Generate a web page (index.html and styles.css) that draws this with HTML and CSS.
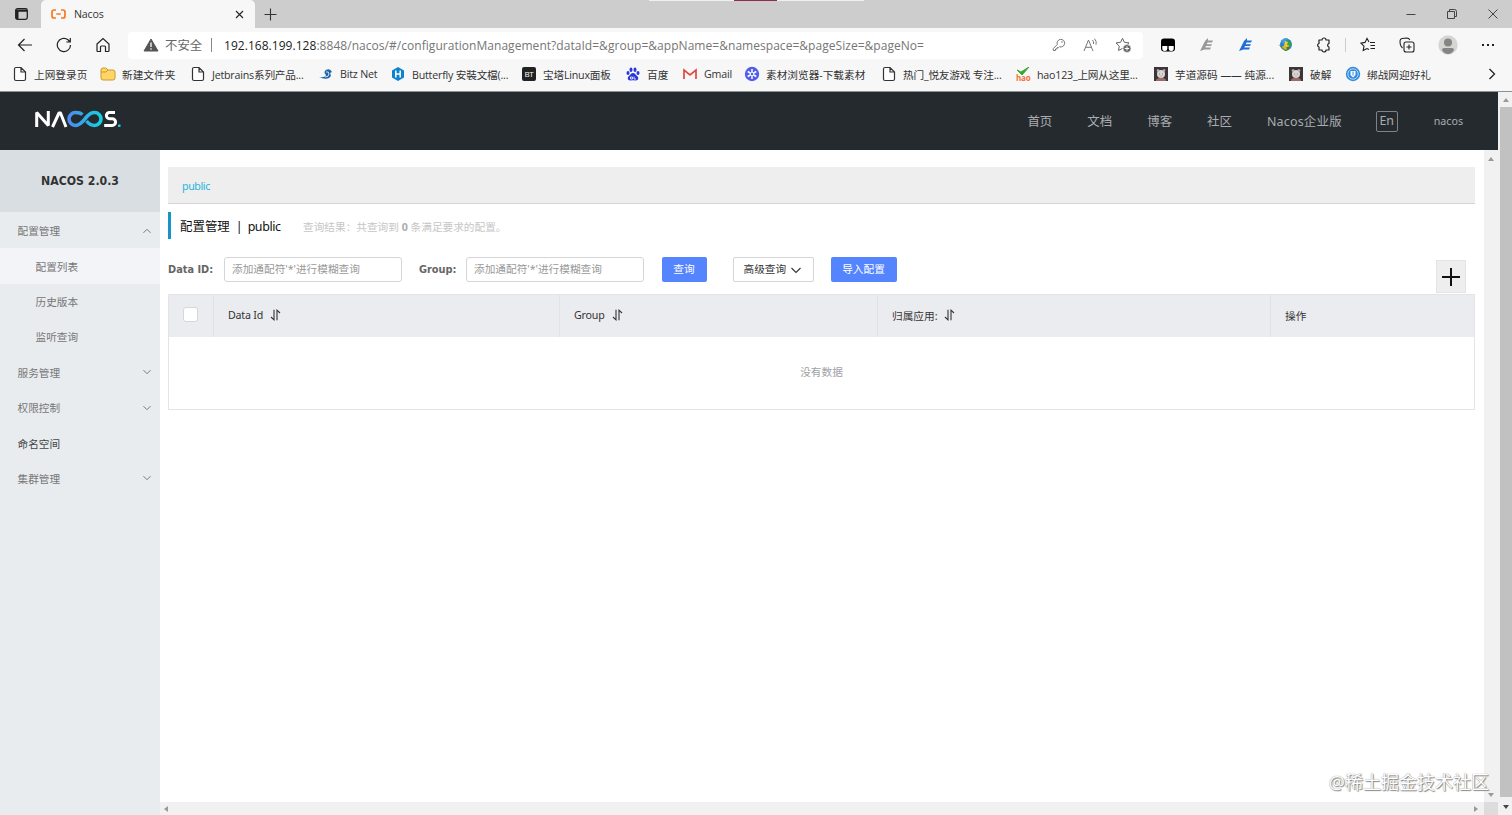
FILE: index.html
```html
<!DOCTYPE html>
<html lang="zh-CN">
<head>
<meta charset="UTF-8">
<title>Nacos</title>
<link rel="stylesheet" href="styles.css">
</head>
<body>

<!-- Shared icons -->
<svg class="defs" width="0" height="0">
    <symbol id="page" viewBox="0 0 16 16"><path d="M4 1.500h5l4.500 4.500v7a1.500 1.500 0 0 1-1.500 1.500H4A1.500 1.500 0 0 1 2.500 13V3A1.500 1.500 0 0 1 4 1.500zM9 1.500V6h4.500" fill="#fff" stroke="#333" stroke-width="1.200"/></symbol>
    <symbol id="chevron" viewBox="0 0 10 10"><path d="M1.500 3.200L5 6.700l3.500-3.500" fill="none" stroke="currentColor"/></symbol>
    <symbol id="sort" viewBox="0 0 11 12"><path d="M4 .8v10L1 8M7 11.200v-10L10 4" fill="none" stroke="#333" stroke-width="1.100"/></symbol>
    <symbol id="avatar" viewBox="0 0 14 14"><path d="M0 0h14v14H0z" fill="#3d3538"/><path d="M2 12.500q5-4 10 0V14H2z" fill="#9b6a62"/><circle cx="7" cy="7" r="4" fill="#d9d5d4"/><circle cx="4" cy="3.500" r="1.300" fill="#bbb5b5"/><circle cx="10" cy="3.500" r="1.300" fill="#bbb5b5"/><path d="M5 7h1M8 7h1M6.500 9h1" stroke="#888"/></symbol>
    <symbol id="ext" viewBox="0 0 16 16"><path d="M1 14L6 4l3-3v2.500h5L13 5.500H8.500l-.7 1.700H13L12 9H7l-.7 1.500H12L11 12.500H5.500z" fill="currentColor"/></symbol>
</svg>

<div class="browser">
    <div class="tabbar">
        <div class="tab-actions">
            <svg width="13" height="12" viewBox="0 0 13 12"><rect x=".7" y=".7" width="11.600" height="10.600" rx="1.800" fill="none" stroke="#222" stroke-width="1.300"/><path d="M1 1.500h11v2.200H1zM1 3h2.500v8H1z" fill="#222"/></svg>
        </div>
        <div class="tab">
            <svg width="15" height="10" viewBox="0 0 15 10"><path d="M5 1H3Q1 1 1 3v4q0 2 2 2h2M10 1h2q2 0 2 2v4q0 2-2 2h-2M5.300 5h4.400" fill="none" stroke="#f47a20" stroke-width="1.700"/></svg>
            <span class="tab-title">Nacos</span>
            <svg width="9" height="9" viewBox="0 0 9 9"><path d="M1 1l7 7M8 1L1 8" stroke="#222" stroke-width="1.100"/></svg>
        </div>
        <svg class="new-tab" width="13" height="13" viewBox="0 0 13 13"><path d="M6.500 .5v12M.5 6.500h12" stroke="#333" stroke-width="1.100"/></svg>
        <div class="top-strip"><span></span></div>
        <div class="window-buttons">
            <svg width="10" height="10" viewBox="0 0 10 10"><path d="M.5 5.500h9" stroke="#444"/></svg>
            <svg width="10" height="10" viewBox="0 0 10 10"><path d="M.5 2.500h7v7h-7zM2.500 2.500V.5h5q2 0 2 2v5h-2" fill="none" stroke="#444"/></svg>
            <svg width="10" height="10" viewBox="0 0 10 10"><path d="M.5 .5l9 9M9.500 .5l-9 9" stroke="#444"/></svg>
        </div>
    </div>

    <div class="toolbar">
        <div class="nav-icons">
            <svg width="16" height="16" viewBox="0 0 16 16"><path d="M15 8H1.500M7.500 2L1.500 8l6 6" fill="none" stroke="#222" stroke-width="1.200"/></svg>
            <svg width="16" height="16" viewBox="0 0 16 16"><path d="M14.500 8A6.600 6.600 0 1 1 12 2.800L14 5M14.300 1v4h-4" fill="none" stroke="#222" stroke-width="1.200"/></svg>
            <svg width="16" height="16" viewBox="0 0 16 16"><path d="M2 7l6-5.500L14 7v6.500q0 1-1 1h-2.500V10q0-1-1-1h-3q-1 0-1 1v4.500H3q-1 0-1-1z" fill="none" stroke="#222" stroke-width="1.200"/></svg>
        </div>
        <div class="address">
            <svg width="16" height="14" viewBox="0 0 16 14"><path d="M8 1l7 12H1z" fill="#555" stroke="#555" stroke-linejoin="round"/><path d="M8 4.500v4.500M8 10.300v1.500" stroke="#fff" stroke-width="1.300"/></svg>
            <span class="insecure">不安全</span>
            <span class="divider"></span>
            <span class="url"><b>192.168.199.128</b>:8848/nacos/#/configurationManagement?dataId=&amp;group=&amp;appName=&amp;namespace=&amp;pageSize=&amp;pageNo=</span>
            <svg width="14" height="14" viewBox="0 0 14 14"><path d="M5.300 6.500A3.800 3.800 0 1 1 7.500 8.700L6.500 9.700H5V11H3.500v1.500H1.300v-2z" fill="none" stroke="#777"/><circle cx="10" cy="4" r=".8" fill="#777"/></svg>
            <svg class="read" width="16" height="14" viewBox="0 0 16 14"><path d="M1 13L5.500 2 10 13M2.500 9.300h6M9.500 2q1.500 1.500 1 4M11.500 .7q2.500 2.500 1.500 6" fill="none" stroke="#777"/></svg>
            <svg width="17" height="16" viewBox="0 0 17 16"><path d="M7.500 1.300l1.900 4 4.600.6-3.300 3.200.8 4.400-4-2.100-4 2.100.8-4.400L1 5.900l4.600-.6z" fill="none" stroke="#666" stroke-linejoin="round"/><circle cx="12" cy="11.500" r="4" fill="#666" stroke="#fff" stroke-width=".6"/><path d="M12 9.300v4.400M9.800 11.500h4.400" stroke="#fff"/></svg>
        </div>
        <div class="ext-icons">
            <svg width="16" height="16" viewBox="0 0 16 16"><rect x="1" y="1.500" width="14" height="13" rx="3" fill="#000"/><path d="M2.300 9h5v2.500a2.500 2.500 0 0 1-5 0zM8.700 9h5v2.500a2.500 2.500 0 0 1-5 0z" fill="#fff"/></svg>
            <svg class="ext-gray" width="16" height="16"><use href="#ext"/></svg>
            <svg class="ext-blue" width="16" height="16"><use href="#ext"/></svg>
            <svg width="16" height="16" viewBox="0 0 16 16"><circle cx="9" cy="7.500" r="6" fill="#2c7fd0"/><path d="M4 4q3-4 7-2.500L9 5 6 7z" fill="#3d9fe0"/><path d="M9 3l5 2q1 3-1 5l-3-1z" fill="#35a13f"/><path d="M8 4l3 1-1 3 3 1-4 5-5-4 3-1z" fill="#f4c930"/><path d="M1 7l6 4 6-2q-1 5-5 5z" fill="#2d8b35"/><path d="M5 10l4-1 1 3-2 1z" fill="#e9a92c"/></svg>
            <svg width="16" height="16" viewBox="0 0 16 16"><path d="M3 3h3a2 2 0 0 1 4 0h3v3.500a1.800 1.800 0 0 0 0 3.500v3h-3a2 2 0 0 1-4 0H3v-3a1.800 1.800 0 0 1 0-3.500z" fill="none" stroke="#222" stroke-width="1.200" stroke-linejoin="round"/></svg>
            <span class="divider"></span>
            <svg width="16" height="16" viewBox="0 0 16 16"><path d="M10 5.500h5M10.500 8.500H15M10.500 11.500H15M9 5L7 1.500 5 5.400l-4 .7 3 3-.8 4.400L7 11.500l2 1" fill="none" stroke="#222" stroke-width="1.100"/></svg>
            <svg width="16" height="16" viewBox="0 0 16 16"><rect x="5" y="5" width="10" height="10" rx="2" fill="none" stroke="#222" stroke-width="1.100"/><path d="M10 7.500v5M7.500 10h5M3.500 11Q1.500 9 1.200 7L1 4q0-2 2-2.500l5-.5q2 0 2.800 2" fill="none" stroke="#222" stroke-width="1.100"/></svg>
            <svg class="profile" width="20" height="20" viewBox="0 0 20 20"><circle cx="10" cy="10" r="9.700" fill="#d5d5d2"/><circle cx="10" cy="7.500" r="4" fill="#858585"/><path d="M4 15q0-2 2-2h8q2 0 2 2-2 4-6 4t-6-4z" fill="#858585"/></svg>
            <svg class="more" width="12" height="4" viewBox="0 0 12 4"><path d="M0 1h2v2H0zM5 1h2v2H5zM10 1h2v2h-2z" fill="#222"/></svg>
        </div>
    </div>

    <div class="bookmarks">
        <span><svg width="16" height="16"><use href="#page"/></svg>上网登录页</span>
        <span><svg width="16" height="16" viewBox="0 0 16 16"><path d="M1 4q0-2 2-2h3l2 2h5q2 0 2 2v6q0 2-2 2H3q-2 0-2-2z" fill="#ffd565" stroke="#c99b2f"/><path d="M1 6h5l2-2" fill="none" stroke="#c99b2f"/></svg>新建文件夹</span>
        <span class="latin"><svg width="16" height="16"><use href="#page"/></svg>Jetbrains系列产品...</span>
        <span class="latin"><svg width="16" height="16" viewBox="0 0 16 16"><path d="M1 11q6 1 7-2-3-3 0-5 4-2 6 2l-2 1q2 3-1 5-4 2-10-1z" fill="#1d62a5"/><path d="M8 6q3-1 3 2T7 11" fill="none" stroke="#cde7fa"/></svg>Bitz Net</span>
        <span class="latin"><svg width="16" height="16" viewBox="0 0 16 16"><path d="M8 1l6 3.500v7L8 15l-6-3.500v-7z" fill="#0e83cd"/><path d="M5.800 4.500v7M10.200 4.500v7M5.800 8h4.400" stroke="#fff" stroke-width="1.500"/></svg>Butterfly 安裝文檔(...</span>
        <span class="latin"><i class="bt-icon">BT</i>宝塔Linux面板</span>
        <span><svg width="16" height="16" viewBox="0 0 16 16" fill="#2936d9"><ellipse cx="3" cy="7" rx="1.500" ry="2"/><ellipse cx="6" cy="3.800" rx="1.500" ry="2.200"/><ellipse cx="10" cy="3.800" rx="1.500" ry="2.200"/><ellipse cx="13" cy="7" rx="1.500" ry="2"/><path d="M8 7q2 0 3 2l2 2q1 3-2 3.500-3-.6-6 0Q2 14 3 11l2-2q1-2 3-2z"/><path d="M5.500 11h2v2h-2zM9 10.500v2.500h2" fill="none" stroke="#fff" stroke-width=".8"/></svg>百度</span>
        <span class="latin"><svg width="16" height="16" viewBox="0 0 16 16"><path d="M2 13V4l6 5 6-5v9" fill="none" stroke="#dd4b3e" stroke-width="1.700"/></svg>Gmail</span>
        <span><svg width="16" height="16" viewBox="0 0 16 16"><circle cx="8" cy="8" r="7.200" fill="#515eec"/><path d="M8 3v10M3.700 5.500l8.600 5M12.300 5.500l-8.600 5" stroke="#fff" stroke-width="1.500"/><circle cx="8" cy="8" r="1.200" fill="#515eec"/></svg>素材浏览器-下载素材</span>
        <span class="latin"><svg width="16" height="16"><use href="#page"/></svg>热门_悦友游戏 专注...</span>
        <span class="latin"><i class="hao-icon"><svg width="14" height="9" viewBox="0 0 14 9"><path d="M1 3l4 2 8-5-7 8z" fill="#37a82f" stroke="#37a82f"/></svg><b>hao</b></i>hao123_上网从这里...</span>
        <span><svg width="16" height="14"><use href="#avatar"/></svg>芋道源码 —— 纯源...</span>
        <span><svg width="16" height="14"><use href="#avatar"/></svg>破解</span>
        <span><svg width="16" height="16" viewBox="0 0 16 16"><circle cx="8" cy="8" r="7.200" fill="#368bdd"/><circle cx="8" cy="8" r="5.200" fill="none" stroke="#aadcff"/><path d="M5.500 5h5v4L8 11.500 5.500 9z" fill="#fff"/><path d="M8 5.500v4" stroke="#368bdd"/></svg>绑战网迎好礼</span>
        <svg class="overflow-arrow" width="8" height="12" viewBox="0 0 8 12"><path d="M1.500 1l5 5-5 5" fill="none" stroke="#222" stroke-width="1.300"/></svg>
    </div>
</div>

<div class="viewport">
    <div class="app">
        <header class="header">
            <svg class="logo" width="88" height="20" viewBox="0 0 88 20">
                <defs><linearGradient id="loop" x1="0" x2="1"><stop offset="0" stop-color="#4b8cf0"/><stop offset="1" stop-color="#16cfe0"/></linearGradient></defs>
                <g fill="none" stroke-width="3">
                    <path d="M2.700 18V3.500L14.300 16.500V2" stroke="#fff" stroke-linejoin="bevel"/>
                    <path d="M18.500 18l6.500-14h1.500L32 18" stroke="#fff" stroke-linejoin="round"/>
                    <path d="M48.500 5.500C46.500 3.800 44 3.500 41.500 3.500a6.500 6.500 0 0 0 0 13c5 0 8-5 11-8.500 2.500-3 4.500-4.500 8-4.500a6.500 6.500 0 0 1 0 13c-3.500 0-6-2-8-4.500" stroke="url(#loop)" stroke-width="3.600"/>
                    <path d="M81 3.500h-5.500a3.100 3.100 0 0 0 0 6.200h2.700a3.400 3.400 0 0 1 0 6.800h-8" stroke="#fff"/>
                </g>
                <path d="M84 15.500h2.500V18H84z" fill="#1ccbe0"/>
            </svg>
            <nav class="top-nav">
                <a>首页</a>
                <a>文档</a>
                <a>博客</a>
                <a>社区</a>
                <a class="enterprise">Nacos企业版</a>
                <a class="lang">En</a>
                <a class="user">nacos</a>
            </nav>
        </header>

        <div class="main">
            <aside class="sidebar">
                <h1>NACOS 2.0.3</h1>
                <ul class="menu">
                    <li>配置管理<svg class="up" width="10" height="10"><use href="#chevron"/></svg></li>
                    <li class="sub active">配置列表</li>
                    <li class="sub">历史版本</li>
                    <li class="sub">监听查询</li>
                    <li>服务管理<svg width="10" height="10"><use href="#chevron"/></svg></li>
                    <li>权限控制<svg width="10" height="10"><use href="#chevron"/></svg></li>
                    <li class="dark">命名空间</li>
                    <li>集群管理<svg width="10" height="10"><use href="#chevron"/></svg></li>
                </ul>
            </aside>

            <div class="frame">
                <section class="content">
                    <div class="namespace">public</div>
                    <div class="title">
                        <h2>配置管理<span class="bar">|</span><span class="name">public</span></h2>
                        <p>查询结果：共查询到 <b>0</b> 条满足要求的配置。</p>
                    </div>
                    <div class="search">
                        <label>Data ID:</label>
                        <div class="input">添加通配符'*'进行模糊查询</div>
                        <label class="group-label">Group:</label>
                        <div class="input">添加通配符'*'进行模糊查询</div>
                        <div class="btn primary query">查询</div>
                        <div class="btn advanced">高级查询<svg width="12" height="12" viewBox="0 0 12 12"><path d="M1.500 4L6 8.500 10.500 4" fill="none" stroke="#333" stroke-width="1.100"/></svg></div>
                        <div class="btn primary import">导入配置</div>
                        <div class="add"><svg width="18" height="18" viewBox="0 0 18 18"><path d="M9 0v18M0 9h18" stroke="#111" stroke-width="2"/></svg></div>
                    </div>
                    <div class="table">
                        <div class="thead">
                            <div class="check"><i></i></div>
                            <div><span class="latin">Data Id</span><svg width="11" height="12"><use href="#sort"/></svg></div>
                            <div><span class="latin">Group</span><svg width="11" height="12"><use href="#sort"/></svg></div>
                            <div>归属应用:<svg width="11" height="12"><use href="#sort"/></svg></div>
                            <div>操作</div>
                        </div>
                        <div class="empty">没有数据</div>
                    </div>
                </section>
                <div class="scroll-y"><i class="arrow up"></i><i class="arrow down"></i></div>
                <div class="scroll-x"><i class="arrow left"></i><i class="arrow right"></i></div>
                <div class="corner"></div>
            </div>
        </div>
    </div>
    <div class="page-scroll"><i class="arrow up"></i><span class="thumb"></span><i class="arrow down"></i></div>
    <div class="watermark">@稀土掘金技术社区</div>
</div>

</body>
</html>
```
FILE: styles.css
```css
* {
    box-sizing: border-box;
}
html, body {
    height: 100%;
    margin: 0;
    padding: 0;
}
body {
    display: flex;
    flex-direction: column;
    overflow: hidden;
    font-family: "Noto Sans", "Noto Sans CJK SC", sans-serif;
    font-size: 10.67px;
    color: #333;
    background: #fff;
}
svg {
    flex: none;
    display: block;
}
.defs {
    position: absolute;
}
i {
    font-style: normal;
}

/* Browser window */
.browser {
    flex: none;
    height: 92px;
    background: #f7f7f7;
    border-bottom: 1px solid #8b9094;
    font-family: "Open Sans", "Noto Sans CJK SC", sans-serif;
}
.tabbar {
    display: flex;
    height: 28px;
    background: #cdcdcd;
}
.tab-actions {
    width: 41px;
    padding: 8px 0 0 15px;
}
.tab {
    display: flex;
    align-items: center;
    width: 214px;
    padding: 0 11px 0 10px;
    background: #f7f7f7;
    border-radius: 5px 5px 0 0;
}
.tab-title {
    flex: 1;
    padding-left: 8px;
    letter-spacing: -0.2px;
}
.new-tab {
    margin: 8px 0 0 9px;
}
.top-strip {
    width: 215px;
    height: 1px;
    margin-left: 372px;
    background: #f0f0f0;
}
.top-strip span {
    display: block;
    width: 43px;
    height: 1px;
    margin-left: 85px;
    background: #8b304c;
}
.window-buttons {
    display: flex;
    align-items: center;
    gap: 31px;
    margin-left: auto;
    padding-right: 14px;
}
.toolbar {
    display: flex;
    align-items: center;
    height: 34px;
}
.nav-icons {
    display: flex;
    gap: 23px;
    width: 128px;
    padding-left: 17px;
}
.address {
    display: flex;
    align-items: center;
    width: 1015px;
    height: 27px;
    padding: 0 11px 0 15px;
    background: #fff;
    border-radius: 4px;
    white-space: nowrap;
}
.insecure {
    width: 47px;
    padding-left: 6px;
    font-size: 12.4px;
    color: #666;
}
.divider {
    width: 1px;
    height: 14px;
    background: #888;
}
.address .divider {
    margin: 0 12px 0 5px;
}
.url {
    flex: 1;
    font-size: 12px;
    letter-spacing: 0.04px;
    color: #767676;
}
.url b {
    font-weight: normal;
    color: #222;
}
.address .read {
    margin: 0 16px 0 17px;
}
.ext-icons {
    display: flex;
    align-items: center;
    flex: 1;
    gap: 23px;
    padding-left: 17px;
}
.ext-icons .divider {
    margin: 0 -9px 0 -10px;
    background: #ccc;
}
.ext-gray {
    color: #999;
}
.ext-blue {
    color: #1f6fd6;
}
.more {
    margin-left: 1px;
}
.bookmarks {
    display: grid;
    grid-template-columns: 88px 90px 128px 72px 132px 103px 57px 62px 137px 135px 137px 135px 57px 1fr 10px;
    align-items: center;
    height: 24px;
    padding: 0 14px 0 12px;
    white-space: nowrap;
}
.bookmarks > span {
    display: flex;
    align-items: center;
    gap: 7px;
}
.bookmarks > span > svg {
    margin-right: -1px;
}
.latin {
    letter-spacing: -0.2px;
}
.bt-icon {
    width: 14px;
    height: 14px;
    border-radius: 2px;
    background: #222;
    color: #fff;
    font-size: 8px;
    line-height: 14px;
    text-align: center;
}
.hao-icon {
    width: 14px;
    height: 15px;
}
.hao-icon b {
    display: block;
    font-size: 8px;
    line-height: 4px;
    color: #f0713c;
}

/* Nacos page */
.viewport {
    position: relative;
    display: flex;
    flex: 1;
    min-height: 0;
}
.app {
    display: flex;
    flex-direction: column;
    width: 1498px;
}
.header {
    display: flex;
    align-items: center;
    height: 58px;
    padding-left: 34px;
    background: #252a2f;
}
.logo {
    margin-bottom: 4px;
}
.top-nav {
    display: flex;
    align-items: center;
    margin-left: auto;
    padding-right: 35px;
    color: #aaacae;
    font-size: 12.45px;
    white-space: nowrap;
}
.top-nav a {
    margin-right: 35px;
}
.top-nav .enterprise {
    margin-right: 34px;
    letter-spacing: 0.2px;
}
.top-nav .lang {
    width: 22px;
    height: 21px;
    margin-right: 36px;
    border: 1px solid #808386;
    border-radius: 2px;
    line-height: 18px;
    text-align: center;
}
.top-nav .user {
    margin-right: 0;
    font-size: 10.67px;
}
.main {
    display: flex;
    flex: 1;
}
.sidebar {
    width: 160px;
    background: #e8ecef;
}
.sidebar h1 {
    margin: 0;
    height: 62px;
    background: #d8dee2;
    font-family: "DejaVu Sans Condensed", "DejaVu Sans", sans-serif;
    font-size: 12.2px;
    line-height: 62px;
    text-align: center;
}
.menu {
    margin: 0;
    padding: 1px 0 0;
    list-style: none;
}
.menu li {
    display: flex;
    align-items: center;
    justify-content: space-between;
    height: 35.4px;
    padding: 0 8px 0 17.5px;
    color: #777;
}
.menu .sub {
    padding-left: 35.5px;
}
.menu .active {
    background: #f3f4f8;
}
.menu .dark {
    color: #444;
}
.menu .up {
    transform: rotate(180deg);
}
.frame {
    display: grid;
    grid-template-columns: 1324px 14px;
    grid-template-rows: 1fr 13px;
}
.content {
    padding: 17px 9px 0 8px;
}
.namespace {
    height: 37px;
    padding-left: 14px;
    background: #eee;
    border-bottom: 1px solid #d5d5d5;
    color: #27b5dc;
    letter-spacing: -0.4px;
    line-height: 38px;
}
.title {
    display: flex;
    align-items: center;
    height: 27px;
    margin-top: 8px;
    border-left: 3px solid #1694c4;
}
.title h2 {
    width: 132px;
    margin: 0;
    padding-left: 9px;
    font-size: 12.45px;
    font-weight: normal;
    color: #111;
}
.title .bar {
    margin: 0 5px 0 6px;
}
.title .name {
    letter-spacing: -0.4px;
}
.title p {
    margin: 2px 0 0;
    color: #c6c6c6;
}
.title b {
    color: #aaa;
}
.search {
    display: flex;
    height: 36px;
    margin-top: 18px;
    line-height: 25px;
}
.search label {
    width: 56px;
    font-family: "DejaVu Sans Condensed", "DejaVu Sans", sans-serif;
    font-size: 10.9px;
    font-weight: bold;
    color: #666;
}
.search .group-label {
    width: 47px;
    margin-left: 17px;
}
.input {
    width: 178px;
    height: 25px;
    padding-left: 7px;
    border: 1px solid #d5d5d5;
    border-radius: 3px;
    line-height: 23px;
    color: #999;
}
.btn {
    height: 25px;
    border-radius: 2px;
    text-align: center;
}
.primary {
    background: #5584ff;
    color: #fff;
}
.query {
    width: 45px;
    margin-left: 17.5px;
}
.advanced {
    display: flex;
    align-items: center;
    gap: 4px;
    width: 81px;
    margin-left: 26px;
    padding-left: 10px;
    border: 1px solid #d5d5d5;
    line-height: 21px;
}
.import {
    width: 66px;
    margin-left: 17px;
}
.add {
    display: flex;
    align-items: center;
    justify-content: center;
    width: 30px;
    height: 33px;
    margin: 3px 9px 0 auto;
    background: #eee;
    border: 1px solid #e4e4e4;
}
.table {
    height: 116px;
    margin-top: 1px;
    border: 1px solid #e2e4e8;
}
.thead {
    display: grid;
    grid-template-columns: 45px 346px 318px 393px 1fr;
    height: 42px;
    background: #ebecf0;
}
.thead div {
    display: flex;
    align-items: center;
    gap: 7px;
    padding: 0 0 2px 14px;
    border-right: 1px solid #dfe2e7;
}
.thead div:last-child {
    border-right: 0;
}
.check i {
    width: 15px;
    height: 15px;
    margin-bottom: 1px;
    border: 1px solid #d5d7db;
    border-radius: 3px;
    background: #fff;
}
.empty {
    line-height: 70px;
    text-align: center;
    color: #a0a2a8;
}

/* Scrollbars */
.scroll-y, .scroll-x, .page-scroll {
    display: flex;
    align-items: center;
    justify-content: space-between;
    background: #f1f1f1;
}
.scroll-y {
    flex-direction: column;
    padding: 7px 0 5px;
}
.scroll-x {
    padding: 0 6px 0 4px;
}
.corner {
    background: #dcdcdc;
}
.page-scroll {
    flex-direction: column;
    align-items: flex-end;
    width: 14px;
    padding: 6px 0;
}
.page-scroll .thumb {
    flex: 1;
    width: 12px;
    margin: 5px 0 8px;
    background: #c1c1c1;
}
.page-scroll .arrow {
    margin-right: 3px;
}
.arrow {
    border: 3px solid transparent;
}
.arrow.up {
    border-top: 0;
    border-bottom: 4px solid #999;
}
.arrow.down {
    border-bottom: 0;
    border-top: 4px solid #999;
}
.page-scroll .down {
    border-top-color: #444;
}
.arrow.left {
    border-left: 0;
    border-right: 4px solid #999;
}
.arrow.right {
    border-right: 0;
    border-left: 4px solid #999;
}
.watermark {
    position: absolute;
    right: 23px;
    bottom: 20px;
    color: #fff;
    font-size: 18px;
    line-height: 26px;
    text-shadow: 0 0 1px #777, 1px 1px 1px #888;
}
```
